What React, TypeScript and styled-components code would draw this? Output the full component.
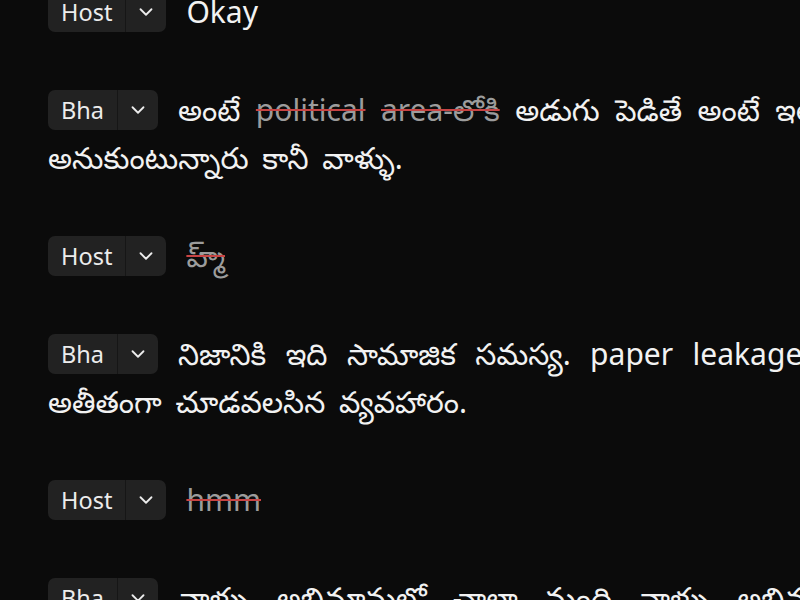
import React from 'react';
import styled, { createGlobalStyle } from 'styled-components';
import { ChevronDown } from 'lucide-react';

const GlobalStyle = createGlobalStyle`
  html, body {
    margin: 0;
    padding: 0;
    background: #0b0b0b;
    overflow: hidden;
  }
`;

const Viewport = styled.main`
  height: 100vh;
  overflow: hidden;
  background: #0b0b0b;
`;

const Transcript = styled.section`
  width: 840px;
  margin-top: -12px;
  padding-left: 48px;
  font-family: "Noto Sans", "Noto Sans Telugu", sans-serif;
  font-size: 30px;
  line-height: 48px;
  word-spacing: 6px;
  color: #f2f2f2;
`;

const Segment = styled.p`
  margin: 0 0 50px;
  text-align: justify;
`;

const Speaker = styled.span`
  display: inline-flex;
  vertical-align: top;
  height: 40px;
  margin: 4px 20px 4px 0;
  border-radius: 7px;
  background: #222222;
  overflow: hidden;
  font-size: 23.5px;
  line-height: 40px;
  word-spacing: 0;
  color: #ececec;

  .name {
    padding: 0 13px;
  }

  .toggle {
    width: 40px;
    display: flex;
    align-items: center;
    justify-content: center;
    border-left: 1px solid #161616;
  }
`;

const Struck = styled.span`
  color: #9c9c9c;
  text-decoration: line-through;
  text-decoration-color: #c84444;
  text-decoration-thickness: 2px;
`;

type Part = string | { del: string };

type Entry = { speaker: string; parts: Part[] };

const entries: Entry[] = [
  { speaker: 'Host', parts: ['Okay'] },
  {
    speaker: 'Bha',
    parts: [
      'అంటే ',
      { del: 'political' },
      ' ',
      { del: 'area-లోకి' },
      ' అడుగు పెడితే అంటే ఇలా అని అనుకుంటున్నారు కానీ వాళ్ళు.',
    ],
  },
  { speaker: 'Host', parts: [{ del: 'హ్మ్' }] },
  {
    speaker: 'Bha',
    parts: ['నిజానికి ఇది సామాజిక సమస్య. paper leakage అనేది అతీతంగా చూడవలసిన వ్యవహారం.'],
  },
  { speaker: 'Host', parts: [{ del: 'hmm' }] },
  {
    speaker: 'Bha',
    parts: ['వాళ్ళు అభిమానుల్లో చాలా మంది వాళ్ళు అభిమానులు కాదు అని చెప్తున్నారు.'],
  },
];

function SpeakerTag({ name }: { name: string }) {
  return (
    <Speaker>
      <span className="name">{name}</span>
      <span className="toggle">
        <ChevronDown size={22} strokeWidth={2} />
      </span>
    </Speaker>
  );
}

export default function App() {
  return (
    <Viewport>
      <GlobalStyle />
      <Transcript>
        {entries.map((entry, i) => (
          <Segment key={i}>
            <SpeakerTag name={entry.speaker} />
            {entry.parts.map((part, j) =>
              typeof part === 'string' ? part : <Struck key={j}>{part.del}</Struck>
            )}
          </Segment>
        ))}
      </Transcript>
    </Viewport>
  );
}
